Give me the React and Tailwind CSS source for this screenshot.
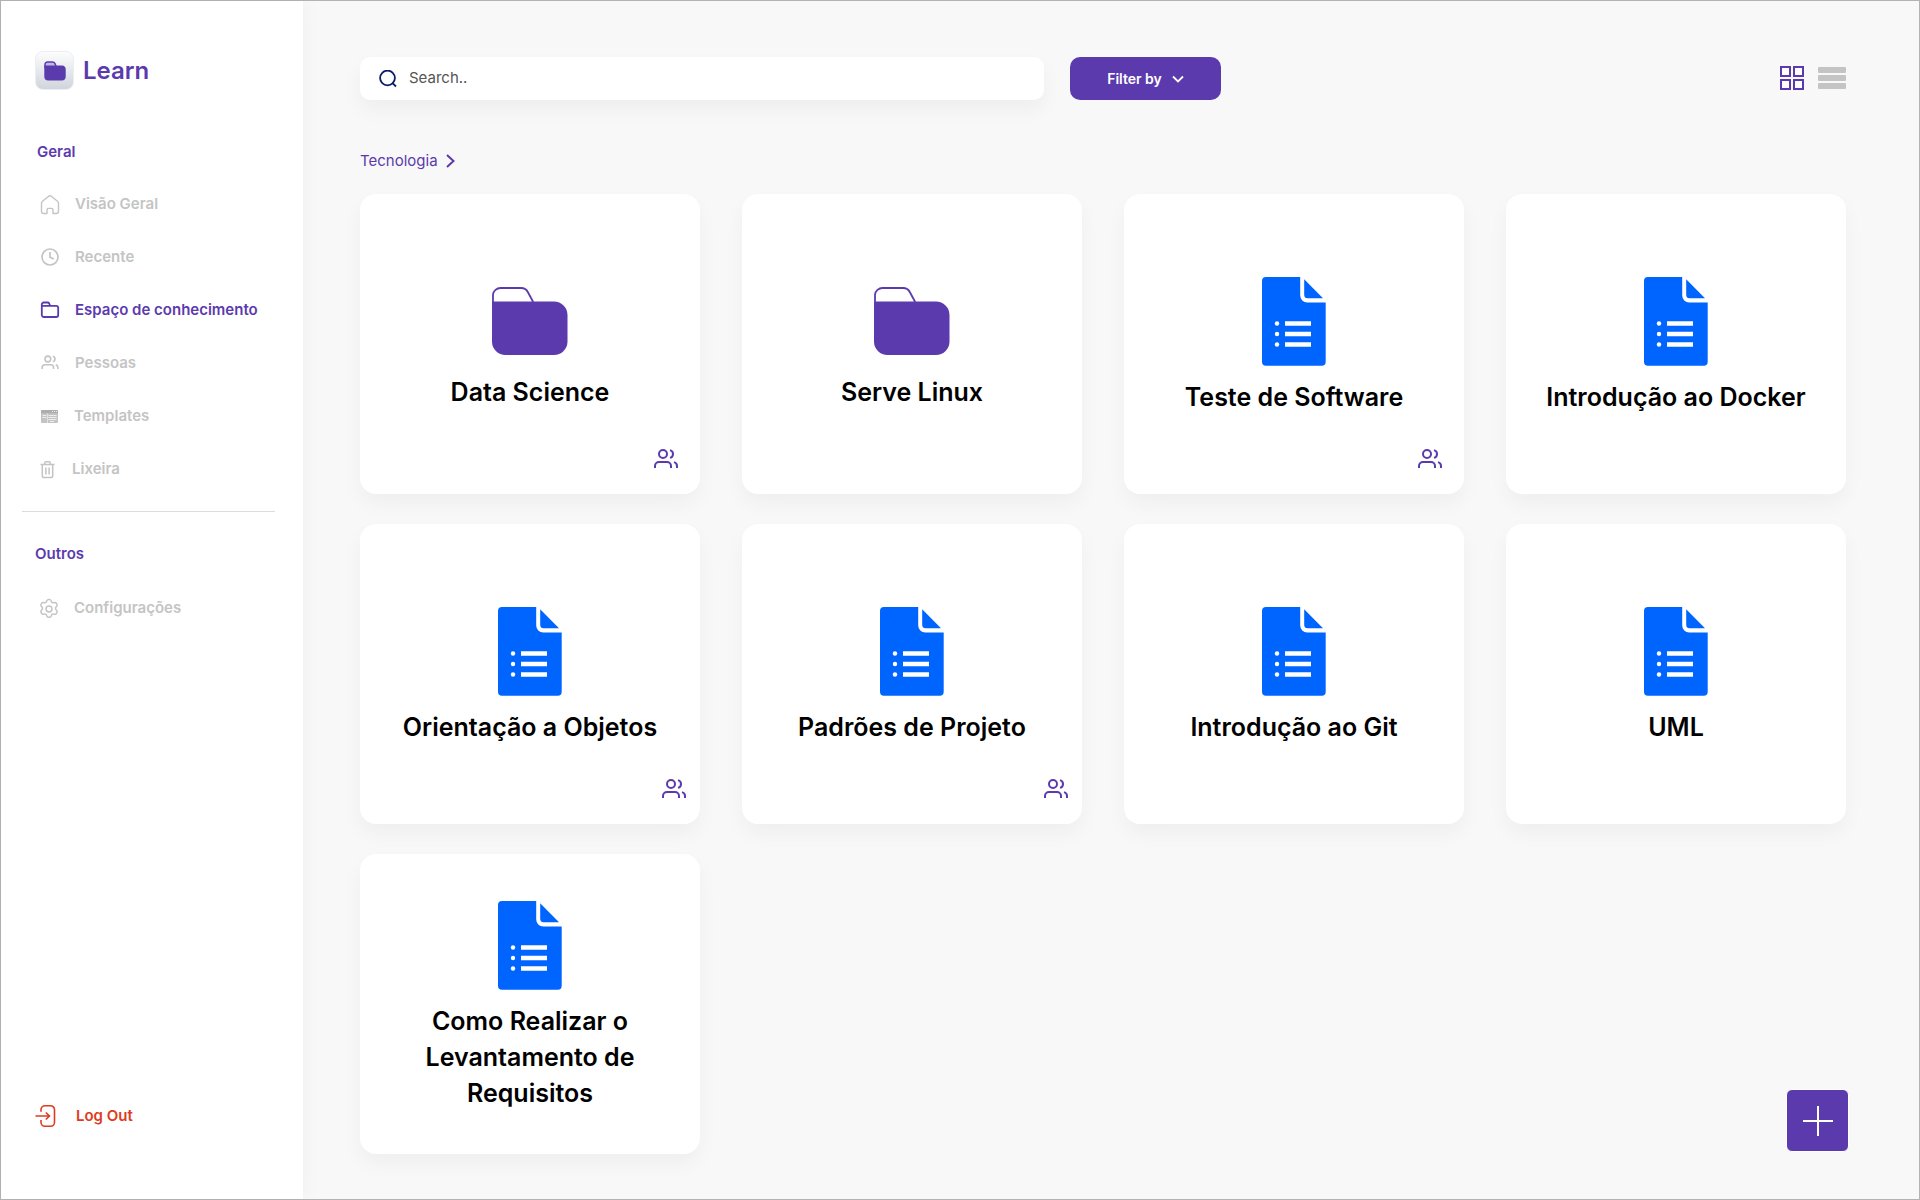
import React from "react";

function Svg({ children, className, viewBox = "0 0 24 24", stroke = 2 }) {
  return (
    <svg viewBox={viewBox} className={className} fill="none" stroke="currentColor" strokeWidth={stroke} aria-hidden="true">
      {children}
    </svg>
  );
}

const HomeIcon = () => (
  <Svg viewBox="0 0 20 20" className="h-5 w-5" stroke={1.4}>
    <path d="M1.500 8.200c0-.8.4-1.500 1-2L8.400 1.500c.8-.7 2.300-.7 3.200 0l5.900 4.700c.6.5 1 1.200 1 2v8c0 1.300-1 2.300-2.200 2.300H13v-3.600a1.500 1.500 0 0 0-1.500-1.500h-3A1.500 1.500 0 0 0 7 14.900v3.600H3.700c-1.200 0-2.200-1-2.200-2.300z" strokeLinejoin="round" />
  </Svg>
);

const ClockIcon = () => (
  <Svg viewBox="0 0 20 20" className="h-5 w-5" stroke={1.7}>
    <circle cx="10" cy="9" r="8" />
    <path d="M10 4v5.200l3.800 1.900" />
  </Svg>
);

const FolderLineIcon = () => (
  <Svg viewBox="0 0 20 20" className="h-5 w-5" stroke={1.8}>
    <path d="M1.800 4.800V3.500a2 2 0 0 1 2-2h3.800c.8 0 1.300.4 1.600 1l1 2.300H16.200a2 2 0 0 1 2 2v7.200a2 2 0 0 1-2 2H3.800a2 2 0 0 1-2-2zM1.800 4.800h8.500" strokeLinejoin="round" />
  </Svg>
);

const UsersPaths = () => (
  <>
    <path d="M17 21v-2a4 4 0 0 0-4-4H5a4 4 0 0 0-4 4v2" />
    <circle cx="9" cy="7" r="4" />
    <path d="M23 21v-2a4 4 0 0 0-3-3.870M16 3.130a4 4 0 0 1 0 7.750" />
  </>
);

const PeopleIcon = () => (
  <Svg viewBox="-2 0 28 28" className="h-5 w-5" stroke={2.2}>
    <UsersPaths />
  </Svg>
);

const TemplateIcon = () => (
  <svg viewBox="0 0 20 20" className="h-5 w-5" aria-hidden="true">
    <rect x="1" y="3" width="17" height="13" rx="1" fill="#c4c4c4" />
    <path d="M1 6.200V4a1 1 0 0 1 1-1h15a1 1 0 0 1 1 1v2.200z" fill="#adadad" />
    <path d="M12 4.500h1M14 4.500h1M16 4.500h1" stroke="#fff" strokeWidth="0.800" />
    <path d="M2.500 8.500h4M2.500 10.500h4M8.500 8.500h8M8.500 10.500h8M8.500 12.500h8M10 14.500h4" stroke="#fff" strokeWidth="0.700" />
    <path d="M7.500 6.500V16" stroke="#eee" strokeWidth="0.700" />
  </svg>
);

const TrashIcon = () => (
  <Svg viewBox="0 0 20 20" className="h-5 w-5" stroke={1.5}>
    <path d="M.5 4.500h14M4.700 4.200V3c0-.8.5-1.300 1.300-1.300h3c.8 0 1.300.5 1.300 1.300v1.200M2.300 4.500v11.200c0 1 .7 1.800 1.700 1.800h7c1 0 1.700-.8 1.700-1.800V4.500M5.900 7.500v7M9.100 7.500v7" />
  </Svg>
);

const GearIcon = () => (
  <Svg viewBox="1 1 22 22" className="h-[22px] w-[22px]" stroke={1.5}>
    <circle cx="12" cy="12" r="2.900" />
    <path d="M9.600 4.300c.2-1.200.9-1.900 2-1.900h.8c1.100 0 1.800.7 2 1.900.2 1.100 1.300 1.700 2.400 1.300 1.100-.4 2.100-.1 2.600.8l.5.8c.5.900.3 1.900-.7 2.700-.9.700-.9 1.900-.2 2.700l.2.200c1 .8 1.200 1.800.7 2.700l-.5.800c-.5.900-1.500 1.200-2.600.8-1.100-.4-2.200.200-2.400 1.300-.2 1.200-.9 1.900-2 1.900h-.8c-1.100 0-1.800-.7-2-1.900-.2-1.100-1.300-1.700-2.400-1.300-1.100.4-2.100.1-2.600-.8l-.5-.8c-.5-.9-.3-1.900.7-2.700.9-.7.9-1.900.2-2.700l-.2-.2c-1-.8-1.200-1.800-.7-2.700l.5-.8c.5-.9 1.500-1.200 2.600-.8 1.100.4 2.200-.2 2.400-1.300z" strokeLinejoin="round" />
  </Svg>
);

const LogoutIcon = () => (
  <Svg viewBox="0 0 22 24" className="h-6 w-[22px]" stroke={1.6}>
    <path d="M6 7.800V5.500A4 4 0 0 1 10 1.700h5.500a4 4 0 0 1 4 4v12.600a4 4 0 0 1-4 4H10a4 4 0 0 1-4-4V16" />
    <path d="M.5 12H14M10.800 8.500 14.500 12l-3.700 3.500" />
  </Svg>
);

const FolderIcon = () => (
  <svg viewBox="0 0 76 96" className="h-24 w-[76px]" aria-hidden="true">
    <path d="M1 26V16.500A7.500 7.500 0 0 1 8.500 10H29c3 0 5.500 1.300 6.800 4l5.400 10" fill="none" stroke="#5b3aae" strokeWidth="1.800" />
    <path d="M0 23.500h62a13.500 13.500 0 0 1 13.500 13.500v27A13.500 13.500 0 0 1 62 77H13.500A13.500 13.500 0 0 1 0 64z" fill="#5b3aae" />
  </svg>
);

const DocIcon = () => (
  <svg viewBox="0 0 64 96" className="mb-2.5 h-24 w-16" aria-hidden="true">
    <path d="M4 4h34.200v18.500a7 7 0 0 0 7 7H63.700v59.200a4 4 0 0 1-4 4H4a4 4 0 0 1-4-4V8a4 4 0 0 1 4-4z" fill="#0065ff" />
    <path d="M42.200 6.300 61 25.200H45.700a3.500 3.500 0 0 1-3.500-3.500z" fill="#0065ff" />
    <g fill="#fff">
      <circle cx="15" cy="50.500" r="2.200" />
      <circle cx="15" cy="61" r="2.200" />
      <circle cx="15" cy="71.500" r="2.200" />
      <path d="M23 48.300h26v4.500H23zM23 58.800h26v4.500H23zM23 69.300h26v4.500H23z" />
    </g>
  </svg>
);

const navItems = [
  { label: "Visão Geral", Icon: HomeIcon, box: "pl-[39px] gap-[15px]" },
  { label: "Recente", Icon: ClockIcon, box: "pl-[39px] gap-[15px]" },
  { label: "Espaço de conhecimento", Icon: FolderLineIcon, box: "pl-[39px] gap-[15px]", active: true },
  { label: "Pessoas", Icon: PeopleIcon, box: "pl-[39px] gap-[15px]" },
  { label: "Templates", Icon: TemplateIcon, box: "pl-[39px] gap-3.5" },
  { label: "Lixeira", Icon: TrashIcon, box: "pl-[39px] gap-3" },
];

const cards = [
  { title: "Data Science", folder: true, shared: "right-[22px]" },
  { title: "Serve Linux", folder: true },
  { title: "Teste de Software", shared: "right-[22px]" },
  { title: "Introdução ao Docker" },
  { title: "Orientação a Objetos", shared: "right-3.5" },
  { title: "Padrões de Projeto", shared: "right-3.5" },
  { title: "Introdução ao Git" },
  { title: "UML" },
  { title: "Como Realizar o Levantamento de Requisitos" },
];

function NavLink({ label, Icon, box, active }) {
  return (
    <a
      href="#"
      aria-current={active ? "page" : undefined}
      className={`flex h-[53px] items-center whitespace-nowrap text-[15px] font-semibold ${box} ${active ? "text-[#5b3aae]" : "text-[#c4c4c4]"}`}
    >
      <Icon />
      {label}
    </a>
  );
}

function Sidebar() {
  return (
    <aside className="z-10 flex w-[302px] shrink-0 flex-col bg-white pb-[71px] pt-[50px] shadow-[0_0_20px_rgba(0,0,0,0.04)]">
      <div className="flex items-center gap-[9px] pl-[34px]">
        <span className="flex h-[39px] w-[39px] items-center justify-center rounded-lg border border-[#eceef1] bg-linear-to-b from-[#fdfdfd] to-[#d0d5dd]">
          <svg viewBox="0 0 22 20" className="h-5 w-[22px]" aria-hidden="true">
            <path d="M1 7V3.500A2.500 2.500 0 0 1 3.500 1H8.500c1.200 0 2 .6 2.500 1.600L12 5" fill="#c3b6e2" stroke="#5b3aae" strokeWidth="1.500" />
            <path d="M.3 4.500H18a4 4 0 0 1 3.700 4v7a4 4 0 0 1-4 4H4.300a4 4 0 0 1-4-4z" fill="#5b3aae" />
          </svg>
        </span>
        <span className="text-2xl leading-9 font-semibold text-[#5b3aae]">Learn</span>
      </div>

      <h2 className="mt-[50px] pl-9 text-[15px] leading-6 font-semibold text-[#5b3aae]">Geral</h2>
      <nav className="mt-3.5 flex flex-col">
        {navItems.map((item) => (
          <NavLink key={item.label} {...item} />
        ))}
      </nav>

      <hr className="mt-[15px] mr-7 ml-[21px] border-[#dcdcdc]" />

      <h2 className="mt-[30px] pl-[34px] text-[15px] leading-6 font-semibold text-[#5b3aae]">Outros</h2>
      <nav className="mt-4">
        <NavLink label="Configurações" Icon={GearIcon} box="pl-[37px] gap-3.5" />
      </nav>

      <button type="button" className="mt-auto flex h-6 items-center gap-[19px] pl-[34px] text-[15px] font-semibold text-[#de3b22]">
        <LogoutIcon />
        Log Out
      </button>
    </aside>
  );
}

function Toolbar() {
  return (
    <div className="flex items-center">
      <label className="flex h-[43px] w-[684px] items-center gap-3 rounded-[10px] bg-white pl-[19px] shadow-[0_10px_20px_rgba(0,0,0,0.045)]">
        <Svg viewBox="0 0 18 18" className="h-[18px] w-[18px] text-[#0b1c6b]" stroke={1.800}>
          <circle cx="8.500" cy="8" r="7.400" />
          <path d="m13.300 12.800 3.700 3.700" />
        </Svg>
        <input type="text" aria-label="Search" placeholder="Search.." className="min-w-0 flex-1 bg-transparent text-[15px] text-[#555] outline-none placeholder:text-[#555]" />
      </label>
      <button type="button" className="ml-[26px] flex h-[43px] w-[151px] items-center justify-center gap-2.5 rounded-[10px] bg-[#5b3aae] text-sm font-semibold text-white">
        Filter by
        <Svg viewBox="0 0 12 8" className="h-2 w-3" stroke={1.800}>
          <path d="m1 1.500 5 5 5-5" />
        </Svg>
      </button>
      <div className="ml-auto flex items-center gap-3.5 pb-px">
        <button type="button" aria-label="Grade" className="text-[#5b3aae]">
          <Svg className="block h-6 w-6">
            <path d="M1 1h9v9H1zM14 1h9v9h-9zM1 14h9v9H1zM14 14h9v9h-9z" fill="#fff" />
          </Svg>
        </button>
        <button type="button" aria-label="Lista" className="flex w-7 flex-col gap-0.5">
          <span className="h-1.5 w-full rounded-[1px] bg-[#c4c4c4]" />
          <span className="h-1.5 w-full rounded-[1px] bg-[#c4c4c4]" />
          <span className="h-1.5 w-full rounded-[1px] bg-[#c4c4c4]" />
        </button>
      </div>
    </div>
  );
}

function Card({ title, folder, shared }) {
  return (
    <article className="relative flex min-h-[300px] flex-col items-center justify-center rounded-2xl bg-white shadow-[0_10px_20px_rgba(0,0,0,0.04)]">
      {folder ? <FolderIcon /> : <DocIcon />}
      <h3 className="max-w-[270px] text-center text-[25px] leading-9 font-semibold text-black">{title}</h3>
      {shared && (
        <span className={`absolute bottom-[23px] text-[#5b3aae] ${shared}`}>
          <Svg className="block h-6 w-6">
            <UsersPaths />
          </Svg>
        </span>
      )}
    </article>
  );
}

export default function App() {
  return (
    <div className="flex min-h-screen border border-[#b3b3b3] bg-[#f8f8f8] font-['Inter',sans-serif]">
      <Sidebar />
      <main className="min-w-0 flex-1 pt-14 pr-[73px] pb-[45px] pl-[57px]">
        <Toolbar />
        <a href="#" className="mt-[50px] mb-[22px] flex h-[22px] w-fit items-center gap-2 text-[15px] text-[#5b3aae]">
          Tecnologia
          <Svg viewBox="0 0 9 14" className="h-3.5 w-[9px]">
            <path d="m1 1 6.500 6L1 13" />
          </Svg>
        </a>
        <section className="grid grid-cols-4 gap-x-[42px] gap-y-[30px]">
          {cards.map((card) => (
            <Card key={card.title} {...card} />
          ))}
        </section>
      </main>
      <button type="button" aria-label="Adicionar" className="fixed right-[71px] bottom-12 z-20 flex h-[63px] w-[63px] items-center justify-center rounded-md border border-white bg-[#5b3aae] text-white">
        <Svg viewBox="0 0 30 30" className="h-[30px] w-[30px]">
          <path d="M15 0v30M0 15h30" />
        </Svg>
      </button>
    </div>
  );
}
